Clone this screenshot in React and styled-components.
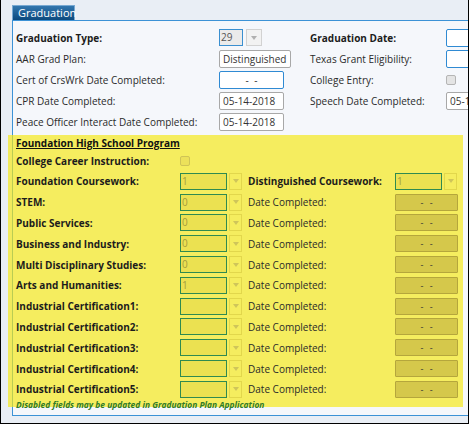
import React from "react";
import styled, { createGlobalStyle, css } from "styled-components";

const Global = createGlobalStyle`
  html, body { margin: 0; padding: 0; overflow: hidden; }
  body {
    font-family: "Open Sans", "DejaVu Sans", sans-serif;
    font-size: 10px;
    color: #222;
    background: #e9eef5;
  }
`;

const Frame = styled.div`
  width: 469px;
  height: 424px;
  box-sizing: border-box;
  border: 1px solid #000;
  border-top: 0;
  padding: 5px 0 0 11px;
  overflow: hidden;
`;

const Tab = styled.div`
  width: 63px;
  height: 15px;
  box-sizing: border-box;
  padding-left: 5px;
  background: linear-gradient(#3276ae, #0c4a7e);
  border: 1px solid #79a9d2;
  border-bottom: 0;
  color: #fff;
  font-size: 11px;
  line-height: 14px;
  white-space: nowrap;
`;

const Panel = styled.div`
  width: 520px;
  height: 396px;
  box-sizing: border-box;
  border: 1px solid #3c92d6;
  background: #f5f7fb;
  padding-top: 6px;
`;

const TopGrid = styled.div`
  display: grid;
  grid-template-columns: 203px 91px 136px 1fr;
  grid-auto-rows: 21px;
  align-items: center;
  padding-left: 3px;
`;

const Label = styled.div`
  font-weight: ${(p) => (p.$bold ? 700 : 400)};
  color: ${(p) => (p.$bold ? "#1c1c1c" : "#2a2a2a")};
  white-space: nowrap;
`;

const Field = styled.div`
  height: 18px;
  box-sizing: border-box;
  width: ${(p) => p.$w}px;
  border: 1px solid ${(p) => (p.$blue ? "#2f8ad3" : "#a8a8a8")};
  border-radius: 2px;
  background: #fff;
  line-height: 16px;
  padding: 0 3px;
  color: #333;
  white-space: nowrap;
  overflow: hidden;
  text-align: ${(p) => (p.$center ? "center" : "left")};
  word-spacing: ${(p) => (p.$center ? "3px" : "0")};
`;

const SelectWrap = styled.div`
  display: flex;
  gap: ${(p) => p.$gap}px;
`;

const SelBox = styled.div`
  height: 17px;
  box-sizing: border-box;
  width: ${(p) => p.$w}px;
  line-height: 15px;
  padding-left: 1px;
  ${(p) =>
    p.$hl
      ? css`
          border: 1px solid #2f8a50;
          background: #ebe151;
          color: #a49c3e;
        `
      : css`
          border: 1px solid #3a8fd0;
          background: #ebebeb;
          color: #555;
        `}
`;

const Arrow = styled.div`
  height: 17px;
  width: ${(p) => p.$w}px;
  box-sizing: border-box;
  display: flex;
  align-items: center;
  justify-content: center;
  border: 1px solid ${(p) => (p.$hl ? "#e2d74c" : "#d2d2d2")};
  background: ${(p) => (p.$hl ? "transparent" : "#f2f2f2")};
  &::after {
    content: "";
    border-left: 3px solid transparent;
    border-right: 3px solid transparent;
    border-top: 4px solid ${(p) => (p.$hl ? "#cfc55a" : "#b0b0b0")};
  }
`;

const Check = styled.div`
  width: 8px;
  height: 8px;
  border-radius: 2px;
  border: 1px solid ${(p) => (p.$hl ? "#cfc456" : "#b5b5b5")};
  background: ${(p) => (p.$hl ? "#ece15a" : "#e4e4e4")};
`;

const Highlight = styled.div`
  margin-top: 3px;
  margin-left: -5px;
  width: 455px;
  height: 272px;
  box-sizing: border-box;
  padding: 1px 4px 0 8px;
  background: rgba(245, 232, 20, 0.68);
`;

const Heading = styled.div`
  font-weight: 700;
  text-decoration: underline;
  color: #111;
  line-height: 15px;
`;

const HlGrid = styled.div`
  display: grid;
  grid-template-columns: 164px 68px 147px 1fr;
  grid-auto-rows: 20.8px;
  align-items: center;
`;

const CheckRow = styled.div`
  display: grid;
  grid-template-columns: 164px 1fr;
  height: 20px;
  align-items: center;
`;

const DateBox = styled.div`
  width: 63px;
  height: 17px;
  box-sizing: border-box;
  border: 1px solid #b5a63c;
  border-radius: 1px;
  background: #d5c84b;
  text-align: center;
  line-height: 15px;
  color: #333;
  font-size: 9px;
  word-spacing: 4px;
`;

const Footer = styled.div`
  font-style: italic;
  font-weight: 700;
  font-size: 8.4px;
  color: #2f7a28;
  line-height: 10px;
`;

const HlSelect = ({ v }) => (
  <SelectWrap $gap={2}>
    <SelBox $hl $w={47}>{v}</SelBox>
    <Arrow $hl $w={13} />
  </SelectWrap>
);

const rows = [
  ["STEM:", "0"],
  ["Public Services:", "0"],
  ["Business and Industry:", "0"],
  ["Multi Disciplinary Studies:", "0"],
  ["Arts and Humanities:", "1"],
  ["Industrial Certification1:", ""],
  ["Industrial Certification2:", ""],
  ["Industrial Certification3:", ""],
  ["Industrial Certification4:", ""],
  ["Industrial Certification5:", ""],
];

export default function App() {
  return (
    <>
      <Global />
      <Frame>
        <Tab>Graduation</Tab>
        <Panel>
          <TopGrid>
            <Label $bold>Graduation Type:</Label>
            <SelectWrap $gap={3}>
              <SelBox $w={24}>29</SelBox>
              <Arrow $w={16} />
            </SelectWrap>
            <Label $bold>Graduation Date:</Label>
            <Field $blue $w={40} />

            <Label>AAR Grad Plan:</Label>
            <Field $w={72}>Distinguished</Field>
            <Label>Texas Grant Eligibility:</Label>
            <Field $blue $w={40} />

            <Label>Cert of CrsWrk Date Completed:</Label>
            <Field $blue $center $w={65}>- -</Field>
            <Label>College Entry:</Label>
            <Check />

            <Label>CPR Date Completed:</Label>
            <Field $w={65}>05-14-2018</Field>
            <Label>Speech Date Completed:</Label>
            <Field $w={65}>05-14-2018</Field>

            <Label>Peace Officer Interact Date Completed:</Label>
            <Field $w={65}>05-14-2018</Field>
          </TopGrid>

          <Highlight>
            <Heading>Foundation High School Program</Heading>
            <CheckRow>
              <Label $bold>College Career Instruction:</Label>
              <Check $hl />
            </CheckRow>
            <HlGrid>
              <Label $bold>Foundation Coursework:</Label>
              <HlSelect v="1" />
              <Label $bold>Distinguished Coursework:</Label>
              <HlSelect v="1" />
              {rows.map(([l, v]) => (
                <React.Fragment key={l}>
                  <Label $bold>{l}</Label>
                  <HlSelect v={v} />
                  <Label>Date Completed:</Label>
                  <DateBox>- -</DateBox>
                </React.Fragment>
              ))}
            </HlGrid>
            <Footer>Disabled fields may be updated in Graduation Plan Application</Footer>
          </Highlight>
        </Panel>
      </Frame>
    </>
  );
}
